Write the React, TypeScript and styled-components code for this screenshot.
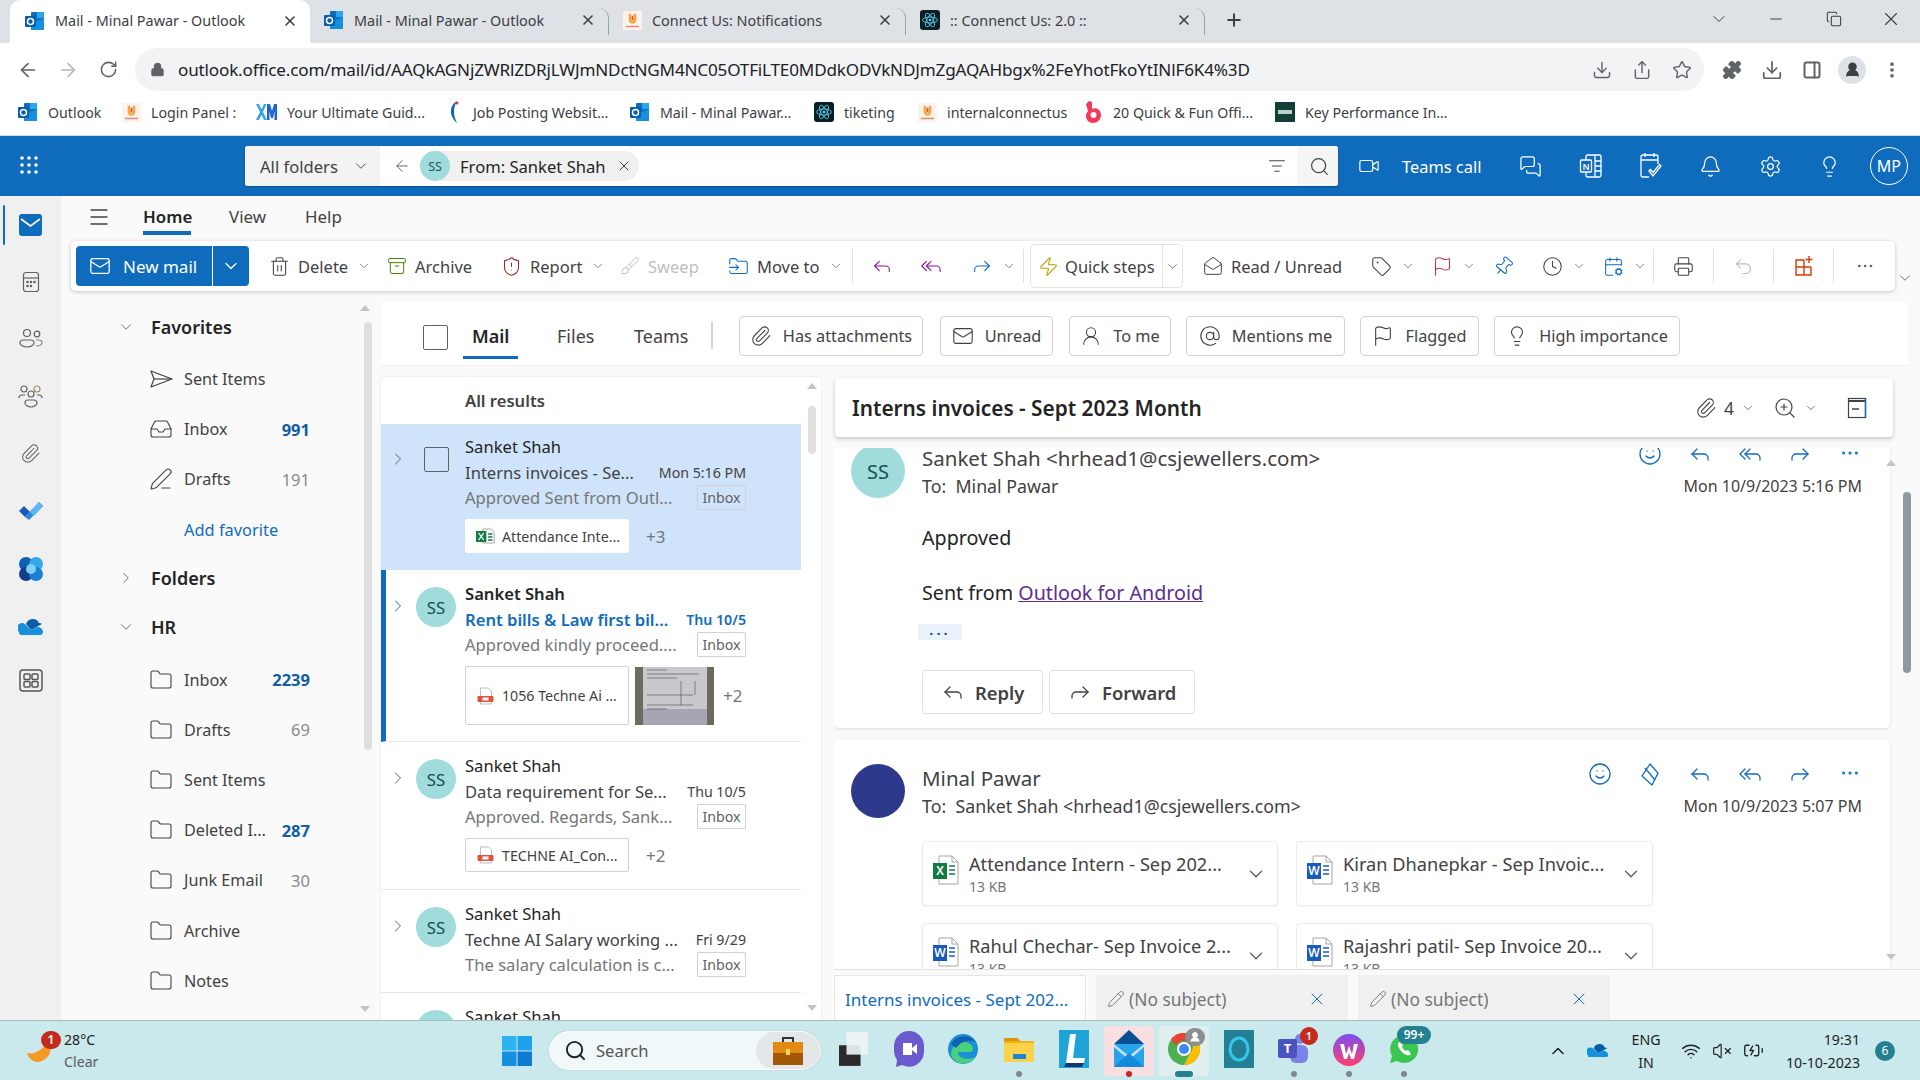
import React from "react";
import styled, { createGlobalStyle } from "styled-components";
import {
  ArrowLeft, ArrowRight, Archive, BatteryCharging, Bell, Brush, CalendarCog, ChevronDown, ChevronRight, ChevronUp, Clock,
  Download, Ellipsis, EllipsisVertical, Flag, Folder, FolderInput, Forward, Inbox, Lightbulb, Lock, Mail, MailOpen,
  Menu, MessagesSquare, Minus, Paperclip, PanelRight, Pencil, PenLine, Pin, Plus, Printer, Puzzle, Reply, ReplyAll, RotateCw,
  Search, Settings, Share, ShieldAlert, Smile, Star, Tag, Trash2, Undo2,
  Video, VolumeX, Wifi, X, Zap, AtSign, UserRound, ZoomIn, Copy, ListFilter,
} from "lucide-react";

const Global = createGlobalStyle`
  html, body { margin: 0; padding: 0; background: #fff; }
  body { font-family: "Noto Sans", "Open Sans", Arial, sans-serif; color: #242424; }
  * { box-sizing: border-box; }
  svg { flex-shrink: 0; }
`;

const BLUE = "#0f6cbd";

const Page = styled.div`
  width: 1920px; height: 1080px; display: flex; flex-direction: column; overflow: hidden; background: #fafafa;
`;

/* ---------- browser chrome ---------- */
const TabStrip = styled.div`
  height: 43px; background: #dee1e6; display: flex; align-items: stretch; padding-left: 10px; flex: none;
`;
const BrowserTab = styled.div<{ $active?: boolean; $w: number; $sep?: boolean }>`
  width: ${(p) => p.$w}px; display: flex; align-items: center; gap: 10px; padding: 0 12px 2px ${(p) => (p.$active ? 15 : 14)}px; font-size: 14.4px; color: #3c4043;
  background: ${(p) => (p.$active ? "#fff" : "transparent")}; border-radius: 10px 10px 0 0; position: relative;
  border-right: ${(p) => (p.$sep ? "1px solid #9aa0a6" : "0")};
  height: ${(p) => (p.$sep ? "27px" : "auto")};
  align-self: ${(p) => (p.$sep ? "center" : "stretch")};
  margin-top: ${(p) => (p.$sep ? "-1px" : "0")};
`;
const TabTitle = styled.span`flex: 1; white-space: nowrap; overflow: hidden;`;
const NewTab = styled.div`width: 58px; display: flex; align-items: center; justify-content: center; color: #3c4043; padding-bottom: 4px;`;
const WindowControls = styled.div`margin-left: auto; display: flex; align-items: center; height: 38px;`;
const WinCtl = styled.div`width: 57.5px; display: flex; align-items: center; justify-content: center; color: #3c4043;`;

const Toolbar = styled.div`height: 48px; background: #fff; display: flex; align-items: flex-end; flex: none; padding-left: 8px; color: #5f6368;`;
const NavBtn = styled.div`width: 40px; height: 43px; display: flex; align-items: center; justify-content: center;`;
const Omnibox = styled.div`
  margin-left: 7px; width: 1569px; height: 43px; background: #f1f3f4; border-radius: 22px; display: flex; align-items: center; padding-left: 15px;
`;
const Url = styled.span`margin-left: 13px; font-size: 17.1px; color: #202124; white-space: nowrap; letter-spacing: -0.01em;`;
const OmniIcons = styled.div`margin-left: auto; display: flex; padding-right: 2px; color: #5f6368;`;
const OmniIcon = styled.div`width: 40px; display: flex; justify-content: center;`;
const ExtIcons = styled.div`display: flex; align-items: center; height: 43px; padding-left: 8px;`;
const ExtIcon = styled.div`width: 40px; display: flex; justify-content: center; align-items: center; color: #5f6368;`;
const ProfileDot = styled.div`width: 28px; height: 28px; border-radius: 50%; background: #dee1e6; color: #3c4043; display: flex; align-items: center; justify-content: center;`;

const BookmarkBar = styled.div`height: 45px; flex: none; background: #fff; border-bottom: 1px solid #d9d9d9; display: flex; align-items: center; padding: 0 0 2px 18px; font-size: 14.2px; color: #3c4043;`;
const Bookmark = styled.div<{ $w: number }>`width: ${(p) => p.$w}px; display: flex; align-items: center; gap: 10px; white-space: nowrap; flex: none;`;

/* ---------- outlook header ---------- */
const AppHeader = styled.div`height: 60px; flex: none; background: ${BLUE}; display: flex; align-items: center; color: #fff;`;
const Waffle = styled.div`width: 245px; padding-left: 20px; display: flex;`;
const SearchBox = styled.div`width: 1093px; height: 40px; background: #fff; border-radius: 3px; display: flex; align-items: center; color: #242424; box-shadow: 0 1px 2px rgba(0,0,0,.3);`;
const Scope = styled.div`width: 135px; height: 100%; background: #f3f3f3; display: flex; align-items: center; padding-left: 15px; gap: 14px; font-size: 16.6px; color: #424242; border-radius: 3px 0 0 3px; white-space: nowrap;`;
const BackArrow = styled.div`width: 40px; display: flex; justify-content: center; color: #616161; padding-left: 3px;`;
const SearchChip = styled.div`width: 219px; height: 30px; background: #f0f0f0; border-radius: 15px; display: flex; align-items: center; font-size: 16.6px; gap: 10px; color: #242424; white-space: nowrap;`;
const ChipAvatar = styled.div`width: 30px; height: 30px; border-radius: 50%; background: #9fdcdb; display: flex; align-items: center; justify-content: center; font-size: 12.5px; color: #1c5a5e; flex: none;`;
const SearchEnd = styled.div`margin-left: auto; display: flex; align-items: center; height: 100%;`;
const FilterBtn = styled.div`width: 40px; display: flex; justify-content: center; color: #424242;`;
const SearchBtn = styled.div`width: 41px; height: 100%; background: #f5f5f5; display: flex; align-items: center; justify-content: center; color: #424242; border-radius: 0 3px 3px 0; padding-left: 4px;`;
const TeamsCall = styled.div`width: 163px; display: flex; align-items: center; padding-left: 20px; gap: 22px; font-size: 16.4px; white-space: nowrap; color: #fff;`;
const HeadIcon = styled.div`width: 60px; display: flex; justify-content: center; color: #fff; margin-left: -0.2px;`;
const Initials = styled.div`width: 38px; height: 38px; border: 1px solid #fff; border-radius: 50%; display: flex; align-items: center; justify-content: center; font-size: 16px; margin-left: 10px;`;

/* ---------- outlook body ---------- */
const Body = styled.div`flex: 1; min-height: 0; display: flex;`;
const Rail = styled.div`width: 61px; flex: none; background: #f0f0f0; display: flex; flex-direction: column; padding-top: 9px; align-items: stretch;`;
const RailItem = styled.div<{ $active?: boolean; $h: number; $mt?: number }>`
  height: ${(p) => p.$h}px; margin-top: ${(p) => p.$mt ?? 0}px; display: flex; align-items: center; justify-content: center; position: relative; color: #616161;
  &::before { content: ""; display: ${(p) => (p.$active ? "block" : "none")}; position: absolute; left: 3px; top: 0; bottom: 0; width: 2px; background: ${BLUE}; border-radius: 2px; }
`;
const Workspace = styled.div`flex: 1; min-width: 0; display: flex; flex-direction: column;`;
const CommandTabs = styled.div`height: 45px; flex: none; display: flex; align-items: center; font-size: 16.9px; color: #424242; padding: 0 0 4px 26px;`;
const Hamburger = styled.div`width: 56px; color: #424242; display: flex;`;
const CmdTab = styled.div<{ $active?: boolean; $w: number }>`
  width: ${(p) => p.$w}px; position: relative; font-weight: ${(p) => (p.$active ? 600 : 400)}; color: ${(p) => (p.$active ? "#242424" : "#424242")}; height: 100%; display: flex; align-items: center;
  &::after { content: ""; display: ${(p) => (p.$active ? "block" : "none")}; position: absolute; left: 0; width: 48px; bottom: 2px; height: 4px; background: ${BLUE}; }
`;
const Ribbon = styled.div`
  height: 50px; flex: none; margin-left: 10px; width: 1824px; background: #fff; border-radius: 5px; box-shadow: 0 1px 4px rgba(0,0,0,.22); display: flex; align-items: center; padding-left: 5px; font-size: 16.5px; color: #424242; position: relative;
`;
const CollapseRibbon = styled.div`position: absolute; right: -19px; top: 28px; color: #616161;`;
const NewMail = styled.div`
  width: 173px; height: 40px; background: ${BLUE}; border-radius: 4px; color: #fff; display: flex; align-items: center; margin-right: 20px; flex: none; font-size: 17px;
`;
const NewMailMain = styled.div`width: 137px; display: flex; align-items: center; gap: 12px; padding-left: 13px; border-right: 1px solid #fff; height: 100%; white-space: nowrap;`;
const NewMailCaret = styled.div`flex: 1; display: flex; justify-content: center;`;
const RibBtn = styled.div<{ $w: number; $dim?: boolean; $pl?: number }>`
  width: ${(p) => p.$w}px; padding-left: ${(p) => p.$pl ?? 0}px; display: flex; align-items: center; gap: 8px; flex: none; white-space: nowrap; color: ${(p) => (p.$dim ? "#bdbdbd" : "#424242")};
`;
const Caret = styled.span`margin-left: 1px; color: #616161; display: flex;`;
const RibSep = styled.div`width: 1px; height: 34px; background: #e0e0e0; flex: none;`;
const QuickSteps = styled.div`
  width: 153px; height: 44px; margin: 0 20px 0 6px; border: 1px solid #e3e3e3; border-radius: 5px; display: flex; align-items: center; flex: none; padding-left: 7px; gap: 6px; white-space: nowrap;
`;
const QuickCaret = styled.div`margin-left: auto; border-left: 1px solid #e3e3e3; width: 20px; height: 100%; display: flex; align-items: center; justify-content: center; color: #616161;`;

const Work = styled.div`flex: 1; min-height: 0; display: flex; margin-top: 11px;`;
const Nav = styled.div`width: 319px; flex: none; position: relative; overflow: hidden;`;
const ScrollThumb = styled.div<{ $top: number; $h: number; $right: number; $c?: string; $w?: number }>`
  position: absolute; top: ${(p) => p.$top}px; height: ${(p) => p.$h}px; right: ${(p) => p.$right}px; width: ${(p) => p.$w ?? 8}px; border-radius: 4px; background: ${(p) => p.$c ?? "#dedede"};
`;
const ScrollArrow = styled.div<{ $top: number; $right: number; $down?: boolean }>`
  position: absolute; top: ${(p) => p.$top}px; right: ${(p) => p.$right}px; width: 0; height: 0; border-left: 5px solid transparent; border-right: 5px solid transparent;
  ${(p) => (p.$down ? "border-top: 6px solid #c4c4c4;" : "border-bottom: 6px solid #c4c4c4;")}
`;
const NavHead = styled.div<{ $mb?: number }>`
  height: 49px; margin-bottom: ${(p) => p.$mb ?? 0}px; display: flex; align-items: center; font-size: 18px; font-weight: 600; color: #242424;
`;
const NavChevron = styled.div`width: 90px; padding-left: 56px; display: flex; color: #616161;`;
const NavRow = styled.div`
  height: 50.2px; display: flex; align-items: center; padding-left: 88px; width: 249px; font-size: 16.2px; color: #424242; gap: 11px;
`;
const NavLabel = styled.span`flex: 1; white-space: nowrap;`;
const NavCount = styled.span<{ $unread?: boolean }>`
  font-size: 16.5px; font-weight: ${(p) => (p.$unread ? 700 : 400)}; color: ${(p) => (p.$unread ? "#115ea3" : "#8a8a8a")};
`;
const AddFav = styled.div`height: 49px; display: flex; align-items: center; padding-left: 123px; font-size: 16.4px; color: #0f6cbd;`;

const RightPane = styled.div`flex: 1; min-width: 0; display: flex; flex-direction: column;`;
const FilterBar = styled.div`
  height: 64px; flex: none; width: 1527px; margin-left: 1px; background: #fff; border-bottom: 1px solid #eee; display: flex; align-items: center; padding: 4px 0 0 42px; font-size: 18px; color: #424242; border-radius: 3px;
`;
const CheckBox = styled.div<{ $c?: string }>`width: 25px; height: 25px; border: 1px solid ${(p) => p.$c ?? "#616161"}; border-radius: 2px; flex: none; margin-top: 3px;`;
const PivotTab = styled.div<{ $active?: boolean; $w: number; $ml?: number }>`
  width: ${(p) => p.$w}px; margin-left: ${(p) => p.$ml ?? 0}px; height: 100%; display: flex; align-items: center; position: relative; font-weight: ${(p) => (p.$active ? 600 : 400)}; color: ${(p) => (p.$active ? "#242424" : "#424242")}; padding-left: 9px;
  &::after { content: ""; display: ${(p) => (p.$active ? "block" : "none")}; position: absolute; left: 0; bottom: 6px; width: 55px; height: 3px; background: ${BLUE}; }
`;
const PivotSep = styled.div`width: 2px; height: 27px; background: #cfd8e2; margin: 0 26px 0 0; flex: none;`;
const FilterChip = styled.div<{ $w: number; $mr: number }>`
  width: ${(p) => p.$w}px; margin-right: ${(p) => p.$mr}px; height: 40px; border: 1px solid #d1d1d1; border-radius: 4px; display: flex; align-items: center; justify-content: center; gap: 11px; font-size: 16.3px; white-space: nowrap; flex: none; background: #fff;
`;

const Split = styled.div`flex: 1; min-height: 0; display: flex; margin-top: 10px;`;
const ListCard = styled.div`width: 442px; flex: none; background: #fff; position: relative; overflow: hidden; border-radius: 4px 4px 0 0; border: 1px solid #f0f0f0; border-bottom: 0;`;
const ListHead = styled.div`height: 47px; padding-left: 84px; display: flex; align-items: center; font-size: 16.6px; font-weight: 600; color: #424242;`;
const MailItem = styled.div<{ $h: number; $sel?: boolean; $unread?: boolean }>`
  width: 420px; height: ${(p) => p.$h}px; flex: none; display: flex; background: ${(p) => (p.$sel ? "#cfe4fa" : "#fff")}; border-bottom: 1px solid ${(p) => (p.$sel ? "#cfe4fa" : "#e6e6e6")};
  border-left: ${(p) => (p.$unread ? `5px solid ${BLUE}` : "0")}; padding-top: ${(p) => (p.$sel ? 10 : 11)}px;
`;
const MailLead = styled.div<{ $unread?: boolean }>`
  width: ${(p) => (p.$unread ? 79 : 84)}px; flex: none; display: flex; align-items: flex-start; padding-left: ${(p) => (p.$unread ? 5 : 10)}px; gap: 12px; padding-top: 6px; color: ${(p) => (p.$unread ? BLUE : "#616161")};
`;
const MailChevron = styled.div`width: 13px; padding-top: 9px; display: flex; justify-content: center; flex: none;`;
const SelectBox = styled.div`padding-left: 8px; padding-top: 4px;`;
const Avatar = styled.div<{ $size: number; $bg?: string }>`
  width: ${(p) => p.$size}px; height: ${(p) => p.$size}px; border-radius: 50%; background: ${(p) => p.$bg ?? "#9fdcdb"}; flex: none; display: flex; align-items: center; justify-content: center; color: #174f52; font-size: ${(p) => Math.min(20, p.$size * 0.42)}px;
`;
const MailMain = styled.div`width: 281px; flex: none; display: flex; flex-direction: column;`;
const MailLine = styled.div<{ $bold?: boolean }>`
  height: 25.5px; display: flex; align-items: center; justify-content: space-between; font-size: 16.6px; line-height: 25px; white-space: nowrap; font-weight: ${(p) => (p.$bold ? 600 : 400)};
`;
const Subject = styled.span<{ $blue?: boolean }>`color: ${(p) => (p.$blue ? BLUE : "#424242")}; font-weight: ${(p) => (p.$blue ? 600 : 400)};`;
const When = styled.span<{ $blue?: boolean }>`font-size: 14.2px; color: ${(p) => (p.$blue ? BLUE : "#424242")}; font-weight: ${(p) => (p.$blue ? 600 : 400)};`;
const Preview = styled.span`color: #767676;`;
const InboxTag = styled.span`
  width: 49px; height: 25px; border: 1px solid #d1d1d1; border-radius: 1px; font-size: 14.2px; color: #616161; display: flex; align-items: center; justify-content: center; flex: none;
`;
const Attachments = styled.div`display: flex; align-items: center; margin-top: 8.5px; gap: 6px; font-size: 14.2px; color: #424242;`;
const AttachChip = styled.div<{ $h: number; $flat?: boolean }>`
  width: 164px; height: ${(p) => p.$h}px; background: #fff; border: 1px solid ${(p) => (p.$flat ? "#fff" : "#d1d1d1")}; border-radius: 2px; display: flex; align-items: center; gap: 7px; padding-left: 10px; white-space: nowrap; overflow: hidden;
`;
const More = styled.span<{ $ml: number }>`font-size: 17px; color: #767676; margin-left: ${(p) => p.$ml}px;`;

const ReadPane = styled.div`width: 1085px; margin-left: 13px; flex: none; display: flex; flex-direction: column; position: relative;`;
const ConvHead = styled.div`
  margin-top: 2px; height: 59px; width: 1058px; background: #fff; border-radius: 4px; box-shadow: 0 2px 4px rgba(0,0,0,.2); display: flex; align-items: center; padding-left: 17px; flex: none; position: relative; z-index: 1;
`;
const ConvTitle = styled.div`font-size: 20.8px; font-weight: 600; color: #242424; white-space: nowrap;`;
const ConvTools = styled.div`margin-left: auto; display: flex; align-items: center; color: #424242; font-size: 17.5px; padding-right: 24px;`;
const ConvTool = styled.div<{ $w: number }>`width: ${(p) => p.$w}px; display: flex; align-items: center; gap: 7px;`;
const Messages = styled.div`flex: 1; min-height: 0; margin-top: 11px; overflow: hidden; position: relative;`;
const MsgCard = styled.div<{ $h?: number; $mt?: number; $pt: number }>`
  width: 1055px; background: #fff; border-radius: 4px; padding: ${(p) => p.$pt}px 28px 0 16px; box-shadow: 0 1px 3px rgba(0,0,0,.13); height: ${(p) => p.$h}px; margin-top: ${(p) => p.$mt ?? 0}px;
`;
const MsgHeader = styled.div`display: flex; gap: 17px;`;
const MsgMeta = styled.div`flex: 1; display: flex; flex-direction: column;`;
const MetaLine = styled.div`height: 28px; display: flex; align-items: center; justify-content: space-between; white-space: nowrap;`;
const Sender = styled.span`font-size: 20.5px; color: #424242;`;
const ToLine = styled.span`font-size: 17.8px; color: #424242;`;
const Stamp = styled.span`font-size: 16px; color: #424242;`;
const Actions = styled.div<{ $up: number }>`display: flex; margin-right: -13px; transform: translateY(-${(p) => p.$up}px);`;
const Action = styled.div`width: 50px; display: flex; justify-content: center; color: #0f6cbd;`;
const Para = styled.div<{ $mt: number }>`margin: ${(p) => p.$mt}px 0 0 71px; font-size: 19.7px; line-height: 30px; color: #242424;`;
const MailLink = styled.a`color: #5c2d91; text-decoration: underline;`;
const Elide = styled.div`margin: 16px 0 0 67px; width: 44px; height: 16px; background: #e9f2fb; border-radius: 2px; display: flex; align-items: center; justify-content: center; color: #0f4c8a; letter-spacing: 3px; font-size: 15px; font-weight: 600; line-height: 8px; padding-bottom: 6px;`;
const ReplyRow = styled.div`display: flex; gap: 6px; margin: 30px 0 0 71px;`;
const ReplyBtn = styled.div<{ $w: number }>`
  width: ${(p) => p.$w}px; height: 44px; border: 1px solid #e0e0e0; border-radius: 4px; display: flex; align-items: center; padding-left: 18px; gap: 10px; font-size: 18.4px; font-weight: 600; color: #424242; background: #fff;
`;
const FileGrid = styled.div`display: grid; grid-template-columns: 356px 357px; column-gap: 18px; row-gap: 17px; margin: 21px 0 0 71px;`;
const FileCard = styled.div`
  height: 65px; border: 1px solid #ececec; border-radius: 4px; display: flex; align-items: flex-start; padding: 13px 10px 0 10px; gap: 10px; box-shadow: 0 1px 2px rgba(0,0,0,.05); background: #fff;
`;
const FileInfo = styled.div`flex: 1; min-width: 0; display: flex; flex-direction: column; margin-top: -4px;`;
const FileName = styled.span`font-size: 18.2px; color: #424242; white-space: nowrap; line-height: 26px;`;
const FileSize = styled.span`font-size: 14px; color: #767676; line-height: 20px;`;
const FileCaret = styled.div`align-self: center; margin-top: -13px; color: #616161; display: flex;`;
const ComposeBar = styled.div`height: 51px; flex: none; border-top: 1px solid #e0e0e0; background: #fafafa; display: flex; padding-top: 5px; gap: 10px; margin-left: -1px;`;
const ComposeTab = styled.div<{ $active?: boolean }>`
  width: 252px; background: ${(p) => (p.$active ? "#fff" : "#f0f0f0")}; border: 1px solid ${(p) => (p.$active ? "#e6e6e6" : "#f0f0f0")}; border-bottom: 0; display: flex; align-items: center; padding: 2px 20px 0 10px; gap: 4px; font-size: ${(p) => (p.$active ? 17 : 17.4)}px; color: ${(p) => (p.$active ? BLUE : "#767676")}; white-space: nowrap; justify-content: space-between;
`;
const ComposeLeft = styled.span`display: flex; align-items: center; gap: 4px;`;

/* ---------- taskbar ---------- */
const Taskbar = styled.div`height: 60px; flex: none; background: #c9e9ec; border-top: 1px solid #a9bcc0; display: flex; align-items: center; position: relative;`;
const Weather = styled.div`width: 502px; display: flex; align-items: center; padding-left: 25px; gap: 8px;`;
const WeatherIcon = styled.div`position: relative; width: 31px; height: 40px;`;
const NotifDot = styled.div<{ $c: string; $w?: number; $r: number; $t: number; $fs?: number }>`
  position: absolute; right: ${(p) => p.$r}px; top: ${(p) => p.$t}px; min-width: ${(p) => p.$w ?? 18}px; height: 18px; padding: 0 3px; border-radius: 9px; background: ${(p) => p.$c}; color: #fff; font-size: ${(p) => p.$fs ?? 11}px; font-weight: 600; display: flex; align-items: center; justify-content: center; white-space: nowrap;
`;
const WeatherText = styled.div`display: flex; flex-direction: column; font-size: 14.2px; line-height: 22px; color: #1f1f1f;`;
const WeatherSub = styled.span`color: #5b5b5b;`;
const WinLogo = styled.div`width: 47px; display: flex; justify-content: flex-start;`;
const TaskSearch = styled.div`
  width: 272px; height: 39px; border-radius: 20px; background: #f1f8f9; border: 1px solid #fff; box-shadow: 0 0 1px rgba(0,0,0,.3); display: flex; align-items: center; padding-left: 14px; gap: 9px; font-size: 16.6px; color: #555; margin-right: 3px;
`;
const SearchBadge = styled.div`margin-left: auto; width: 64px; height: 100%; border-radius: 20px; background: #e3e7e7; display: flex; align-items: center; justify-content: center;`;
const TaskCell = styled.div<{ $w?: number; $bg?: string }>`
  width: ${(p) => p.$w ?? (p.$bg ? 50 : 55)}px; margin: 0 ${(p) => (p.$bg ? 2.5 : 0)}px; height: 50px; flex: none; display: flex; align-items: center; justify-content: center; position: relative; background: ${(p) => p.$bg ?? "transparent"}; border-radius: 4px; padding-bottom: 4px;
`;
const RunDot = styled.div<{ $c?: string; $wide?: boolean }>`
  position: absolute; bottom: -1px; left: 50%; transform: translateX(-50%); width: ${(p) => (p.$wide ? 18 : 6)}px; height: 6px; border-radius: 3px; background: ${(p) => p.$c ?? "#7d8a8c"};
`;
const TrayGap = styled.div`width: 112px; flex: none;`;
const Tray = styled.div<{ $w: number }>`width: ${(p) => p.$w}px; flex: none; display: flex; justify-content: center; align-items: center; color: #1f1f1f;`;
const TrayText = styled.div<{ $right?: boolean; $w: number }>`
  width: ${(p) => p.$w}px; flex: none; display: flex; flex-direction: column; font-size: 14.2px; line-height: 23px; color: #1f1f1f; text-align: ${(p) => (p.$right ? "right" : "center")};
`;
const Counter = styled.div`margin-left: 15px; width: 20px; height: 20px; border-radius: 50%; background: #22808f; color: #fff; font-size: 12px; display: flex; align-items: center; justify-content: center;`;

/* ---------- drawn logos ---------- */
const OutlookLogo = ({ s = 20 }: { s?: number }) => (
  <svg width={s} height={s} viewBox="0 0 20 20"><rect x="6" y="1" width="13" height="18" rx="1" fill="#0f6cbd" /><rect x="12" y="1" width="7" height="6" fill="#28a8ea" /><rect x="6" y="7" width="7" height="6" fill="#0078d4" /><path d="M6 13l13-6v11a1 1 0 01-1 1H7a1 1 0 01-1-1z" fill="#1490df" /><rect x="0" y="5" width="11" height="11" rx="1" fill="#0a5da8" /><circle cx="5.5" cy="10.5" r="3" fill="none" stroke="#fff" strokeWidth="1.5" /></svg>
);
const ConnectLogo = ({ s = 19 }: { s?: number }) => (
  <svg width={s} height={s} viewBox="0 0 20 20"><rect width="20" height="20" fill="#fdf3ee" /><path d="M6 3v6c0 3 2 4.5 4 4.5s4-1.5 4-4.5V3h-2.6v6c0 1-.6 2-1.4 2S8.6 10 8.600 9V3z" fill="#f2a93b" /><path d="M9 5h2v5H9z" fill="#e2502c" /><rect x="3" y="15.500" width="14" height="1.600" fill="#e28d7a" /></svg>
);
const ReactLogo = ({ s = 20 }: { s?: number }) => (
  <svg width={s} height={s} viewBox="0 0 20 20"><rect width="20" height="20" rx="3" fill="#0d1f24" /><g fill="none" stroke="#61dafb" strokeWidth=".8"><ellipse cx="10" cy="10" rx="7.500" ry="3" /><ellipse cx="10" cy="10" rx="7.500" ry="3" transform="rotate(60 10 10)" /><ellipse cx="10" cy="10" rx="7.500" ry="3" transform="rotate(120 10 10)" /></g><circle cx="10" cy="10" r="1.300" fill="#61dafb" /></svg>
);
const XmLogo = () => (
  <svg width="21" height="16" viewBox="0 0 21 16"><path d="M0 0h3l2.500 5L8 0h2.500L7 8l4 8H8L5.500 11 3 16H0l4-8z" fill="#35a7e8" /><path d="M11 16V0h3l2 7 2-7h3v16h-2.500V7L17 14h-2l-1.500-7v9z" fill="#1f63d6" /></svg>
);
const JobLogo = () => (
  <svg width="20" height="24" viewBox="0 0 20 24"><path d="M14 1C7 5 5 15 14 23 10 15 10 8 14 1z" fill="#1465b0" /><circle cx="14" cy="3" r="1.500" fill="#d93a2b" /></svg>
);
const FunLogo = () => (
  <svg width="19" height="24" viewBox="0 0 19 24"><path d="M5 1l3 1v7c4-2 9 1 9 6 0 5-4 8-8 8-4 0-7-3-7-7 0-2 .7-3.500 2-5L2 4z" fill="#f23a5a" /><circle cx="9.500" cy="15" r="3" fill="#fff" /></svg>
);
const KpiLogo = () => (
  <svg width="20" height="20" viewBox="0 0 20 20"><rect width="20" height="20" fill="#123f36" /><rect x="3" y="8" width="14" height="4" fill="#b9d3cc" /></svg>
);
const WaffleIcon = () => (
  <svg width="20" height="20" viewBox="0 0 20 20" fill="#fff">{[2, 9, 16].flatMap((y) => [2, 9, 16].map((x) => <circle key={`${x}${y}`} cx={x} cy={y} r="1.800" />))}</svg>
);
const NotesIcon = () => (
  <svg width="24" height="26" viewBox="0 0 24 26" fill="none" stroke="#fff" strokeWidth="1.300"><rect x="7" y="2" width="15" height="22" rx="1.500" /><path d="M16 2v22M16 8h6M16 13h6M16 18h6" /><rect x="1.500" y="7" width="11" height="12" rx="1" fill={BLUE} /><text x="7" y="16.500" fontSize="9" fontFamily="Noto Sans" fontWeight="600" fill="#fff" stroke="none" textAnchor="middle">N</text></svg>
);
const TodoHeadIcon = () => (
  <svg width="24" height="28" viewBox="0 0 24 28" fill="none" stroke="#fff" strokeWidth="1.300"><path d="M20 12V5a2 2 0 00-2-2H5a2 2 0 00-2 2v18a2 2 0 002 2h6" /><path d="M3 8h17M7 1v4M16 1v4" /><path d="M11 19l4 5 8-10 -1.500-1.500-6.500 8-2.500-3z" /></svg>
);
const RailMail = () => (
  <svg width="25" height="24" viewBox="0 0 25 24"><rect x="1" y="1" width="23" height="22" rx="3" fill={BLUE} /><path d="M3 6l9.500 7L22 6" fill="none" stroke="#fff" strokeWidth="1.600" /></svg>
);
const PeopleIcon = () => (
  <svg width="26" height="20" viewBox="0 0 26 20" fill="none" stroke="#616161" strokeWidth="1.200"><circle cx="9" cy="5" r="3.500" /><circle cx="19" cy="6" r="2.800" /><path d="M2 15c0-2 1-3 3-3h8c2 0 3 1 3 3 0 2-3 4-7 4s-7-2-7-4z" /><path d="M18 12h3c2 0 3 1 3 2.500 0 2-2 3.500-6 3.500" stroke="#a08a70" /></svg>
);
const GroupsIcon = () => (
  <svg width="26" height="24" viewBox="0 0 26 24" fill="none" stroke="#616161" strokeWidth="1.200"><circle cx="6" cy="5" r="3" /><circle cx="19" cy="5" r="3" stroke="#a08a70" /><circle cx="13" cy="10" r="3" /><path d="M1 14c0-2 1-3 3-3h3M24 14c0-2-1-3-3-3h-2M7 19c0-2 1-3 3-3h6c2 0 3 1 3 3 0 2-3 4-6 4s-6-2-6-4z" /></svg>
);
const TodoLogo = () => (
  <svg width="26" height="22" viewBox="0 0 26 22"><path d="M1 12l5-5 6 6-5 5z" fill="#185abd" /><path d="M7 18L21 3l4 4L11 21z" fill="#2b88d8" /><path d="M12 13L21 3l4 4-9 10z" fill="#5eb5f2" /></svg>
);
const CubeLogo = () => (
  <svg width="26" height="26" viewBox="0 0 26 26"><circle cx="8" cy="8" r="7" fill="#0f5fb5" /><circle cx="18" cy="8" r="7" fill="#35a8e8" /><circle cx="8" cy="18" r="7" fill="#123f8a" /><circle cx="18" cy="18" r="7" fill="#1c7fd6" /><circle cx="13" cy="13" r="5" fill="#7fd0f5" /></svg>
);
const OneDriveLogo = ({ s = 26 }: { s?: number }) => (
  <svg width={s} height={s * 0.62} viewBox="0 0 26 16"><path d="M8 5a7 7 0 0113-1 5 5 0 013 1l-11 6z" fill="#0a5da8" /><path d="M1 13a5 5 0 016-8l6 6 6-3c3 0 6 2 6 5 0 1-1 3-3 3H4c-2 0-3-1-3-3z" fill="#1490df" /></svg>
);
const AppsIcon = () => (
  <svg width="24" height="23" viewBox="0 0 24 23" fill="none" stroke="#555" strokeWidth="1.500"><rect x="1" y="1" width="22" height="21" rx="3" /><rect x="5" y="5" width="6" height="5.500" rx="1" /><rect x="13" y="5" width="6" height="5.500" rx="1" /><rect x="5" y="12.500" width="6" height="5.500" rx="1" /><rect x="13" y="12.500" width="6" height="5.500" rx="1" /></svg>
);
const CalendarRail = () => (
  <svg width="20" height="22" viewBox="0 0 20 22" fill="none" stroke="#616161" strokeWidth="1.200"><rect x="2.500" y="1.500" width="15" height="19" rx="2.500" /><path d="M2.500 7h15" /><circle cx="6.500" cy="11" r=".7" fill="#616161" /><circle cx="10" cy="11" r=".7" fill="#616161" /><circle cx="13.500" cy="11" r=".7" fill="#616161" /><circle cx="6.500" cy="15" r=".7" fill="#616161" /><circle cx="10" cy="15" r=".7" fill="#616161" /></svg>
);
const SendIcon = () => (
  <svg width="24" height="24" viewBox="0 0 24 24" fill="none" stroke="#424242" strokeWidth="1.200" strokeLinejoin="round"><path d="M2 4l21 8-21 8 3-8z" /><path d="M5 12h18" /></svg>
);
const AddAppIcon = () => (
  <svg width="22" height="22" viewBox="0 0 22 22" fill="none" stroke="#d83b01" strokeWidth="1.400"><path d="M11 5H3v15h15v-8M3 12h15M11 5v15" /><path d="M16 1v7M12.500 4.500h7" /></svg>
);
const CollapseIcon = () => (
  <svg width="24" height="24" viewBox="0 0 24 24" fill="none"><rect x="3.500" y="2.500" width="17" height="19" stroke="#424242" strokeWidth="1.200" /><path d="M3.500 5h17" stroke="#424242" strokeWidth="2" /><path d="M7 13h7" stroke="#424242" strokeWidth="1.500" /><path d="M20.500 2.500v19" stroke={BLUE} strokeWidth="1.500" /></svg>
);
const FluentDiamond = () => (
  <svg width="24" height="26" viewBox="0 0 24 26" fill="none" stroke={BLUE} strokeWidth="1.300"><path d="M12 2l8 9-6 12-10-9z" /><path d="M7 6l10 12" /></svg>
);
const ExcelSmall = () => (
  <svg width="19" height="16" viewBox="0 0 22 16" preserveAspectRatio="none"><path d="M8 1h10l3 3v11H8z" fill="#fff" stroke="#a0a0a0" /><rect x="0" y="3" width="12" height="11" fill="#107c41" /><path d="M3 5l6 7M9 5l-6 7" stroke="#fff" strokeWidth="1.200" /><path d="M14 6h5M14 9h5M14 12h5" stroke="#107c41" strokeWidth="1.300" /></svg>
);
const PdfSmall = () => (
  <svg width="19" height="18" viewBox="0 0 18 18"><path d="M4 1h8l3 3v13H4z" fill="#fff" stroke="#bdbdbd" /><rect x="1" y="9" width="16" height="6" rx="1" fill="#e0533d" /><rect x="6" y="10.500" width="6" height="3" fill="#fff" /></svg>
);
const DocIcon = ({ kind }: { kind: "x" | "w" }) => (
  <svg width="26" height="30" viewBox="0 0 26 30"><path d="M6 1h13l6 6v22H6z" fill="#fff" stroke="#a6a6a6" /><path d="M19 1v6h6" fill="none" stroke="#a6a6a6" /><rect x="0" y="8" width="14" height="16" fill={kind === "x" ? "#107c41" : "#185abd"} /><text x="7" y="20" fontSize="12" fontFamily="Noto Sans" fontWeight="600" fill="#fff" textAnchor="middle">{kind === "x" ? "X" : "W"}</text>{[11, 15, 19].map((y) => <path key={y} d={`M16 ${y}h6`} stroke={kind === "x" ? "#107c41" : "#185abd"} strokeWidth="1.500" />)}</svg>
);
const Thumb = () => (
  <svg width="79" height="58" viewBox="0 0 79 58"><rect width="79" height="58" fill="#6e6a60" /><rect x="8" y="0" width="64" height="58" fill="#c9c8cc" /><rect x="8" y="42" width="64" height="16" fill="#a6a5b4" /><g stroke="#4a4a52" strokeWidth=".6" fill="none"><path d="M12 3h20M12 7h52M12 11h30M12 28h46M12 38h46M12 42h20M46 14v24M60 14v14" /></g></svg>
);
const MoonLogo = () => (
  <svg width="32" height="34" viewBox="0 0 32 34"><path d="M2 22c8 2 16-3 22-14 4 8 2 18-7 22-6 3-13-1-15-8z" fill="#f59a23" /></svg>
);
const WindowsLogo = () => (
  <svg width="30" height="30" viewBox="0 0 30 30"><rect width="14.500" height="14.500" fill="#2bb4f0" /><rect x="15.500" width="14.500" height="14.500" fill="#1da1ea" /><rect y="15.500" width="14.500" height="14.500" fill="#1590e0" /><rect x="15.500" y="15.500" width="14.500" height="14.500" fill="#0f7ad1" /></svg>
);
const BagLogo = () => (
  <svg width="30" height="29" viewBox="0 0 30 29"><path d="M10 6V2h10v4" fill="none" stroke="#333" strokeWidth="2" /><rect y="6" width="30" height="11" fill="#e38a14" /><rect y="17" width="30" height="12" fill="#a35808" /><rect x="13" y="13" width="4" height="6" fill="#ffd54a" /></svg>
);
const TaskViewLogo = () => (
  <svg width="30" height="36" viewBox="0 0 32 36"><rect x="0" y="14" width="23" height="22" fill="#2a2a2a" /><rect x="8" y="0" width="23" height="24" fill="#eef3f4" opacity=".92" /></svg>
);
const MeetLogo = () => (
  <svg width="30" height="36" viewBox="0 0 30 36"><path d="M15 0a15 15 0 0115 15v6a15 15 0 01-22 13l-6 2 1-7A15 15 0 010 21v-6A15 15 0 0115 0z" fill="#6a5acd" /><rect x="9" y="12" width="9" height="12" fill="#fff" /><path d="M18 17l5-4v10l-5-4z" fill="#fff" /></svg>
);
const EdgeLogo = () => (
  <svg width="30" height="30" viewBox="0 0 30 30"><circle cx="15" cy="15" r="15" fill="#1a8fd8" /><path d="M3 20C4 10 14 5 22 10c4 3 4 8 0 8H10c0 6 8 9 17 5-4 6-13 8-18 5-3-2-6-5-6-8z" fill="#49d17e" /><path d="M3 10a15 15 0 0125-2c-6-3-15-1-20 6z" fill="#0e62b0" /></svg>
);
const FolderLogo = () => (
  <svg width="30" height="30" viewBox="0 0 30 30"><path d="M0 4h13l3 3h14v21H0z" fill="#f5b30f" /><path d="M0 4h13l3 3H0z" fill="#d69412" /><rect y="9" width="30" height="19" fill="#fdd24b" /><rect x="9" y="20" width="13" height="5" fill="#1787d6" /></svg>
);
const LLogo = () => (
  <svg width="30" height="38" viewBox="0 0 30 38"><rect width="30" height="38" fill="#1fa4d8" /><path d="M11 4h6l-3 24h12l-1 5H7z" fill="#fff" /><path d="M7 33h18l-2 4H5z" fill="#16366f" /></svg>
);
const MailLogo = () => (
  <svg width="30" height="37" viewBox="0 0 30 37"><path d="M15 0L0 14h30z" fill="#0b4f94" /><rect y="14" width="30" height="23" fill="#29a3ec" /><path d="M0 14l15 12 15-12v3L15 30 0 17z" fill="#bce4fb" /><path d="M0 37l15-14 15 14z" fill="#148ada" /></svg>
);
const ChromeLogo = () => (
  <svg width="34" height="34" viewBox="0 0 34 34"><circle cx="17" cy="17" r="16" fill="#4caf50" /><path d="M17 1a16 16 0 0114 8H17a8 8 0 00-8 5L4 7a16 16 0 0113-6z" fill="#ea4335" /><path d="M31 9a16 16 0 01-14 24l6-12a8 8 0 000-12z" fill="#fbbc05" /><circle cx="17" cy="17" r="7" fill="#fff" /><circle cx="17" cy="17" r="5" fill="#4285f4" /></svg>
);
const AlexaLogo = () => (
  <svg width="30" height="38" viewBox="0 0 30 38"><rect width="30" height="38" fill="#237f93" /><ellipse cx="15" cy="19" rx="9" ry="11" fill="none" stroke="#35c8ea" strokeWidth="3" /></svg>
);
const TeamsLogo = () => (
  <svg width="32" height="36" viewBox="0 0 32 36"><circle cx="22" cy="8" r="5" fill="#7b83eb" /><rect x="12" y="14" width="18" height="18" rx="6" fill="#7b83eb" /><rect x="0" y="8" width="19" height="19" rx="2" fill="#4b53bc" /><text x="9.500" y="22" fontSize="13" fontWeight="700" fontFamily="Noto Sans" fill="#fff" textAnchor="middle">T</text></svg>
);
const WpsLogo = () => (
  <svg width="32" height="38" viewBox="0 0 32 38"><defs><linearGradient id="wg" x1="0" y1="0" x2="0" y2="1"><stop offset="0" stopColor="#7a4ff0" /><stop offset="1" stopColor="#ff3f6e" /></linearGradient></defs><circle cx="16" cy="20" r="16" fill="url(#wg)" /><path d="M7 14h4l2 10 3-8 3 8 2-10h4l-4 15h-3l-2-6-2 6h-3z" fill="#fff" /></svg>
);
const WhatsLogo = () => (
  <svg width="30" height="30" viewBox="0 0 30 30"><path d="M15 1a14 14 0 00-12 21L1 29l7-2a14 14 0 107-26z" fill="#3cc651" /><path d="M10 8c-2 2-1 6 3 10s7 4 9 2l-3-4-2 1c-2-1-3-2-4-4l1-2z" fill="#fff" /></svg>
);

const Ic = { size: 20, strokeWidth: 1.3 };

const bookmarks: [number, React.ReactNode, string][] = [
  [104, <OutlookLogo key="a" />, "Outlook"],
  [134, <ConnectLogo key="b" />, "Login Panel :"],
  [187, <XmLogo key="c" />, "Your Ultimate Guid..."],
  [187, <JobLogo key="d" />, "Job Posting Websit..."],
  [184, <OutlookLogo key="e" />, "Mail - Minal Pawar..."],
  [104, <ReactLogo key="f" />, "tiketing"],
  [166, <ConnectLogo key="g" />, "internalconnectus"],
  [191, <FunLogo key="h" />, "20 Quick & Fun Offi..."],
  [190, <KpiLogo key="i" />, "Key Performance In..."],
];

const navFolders: [string, string, boolean][] = [
  ["Inbox", "2239", true], ["Drafts", "69", false], ["Sent Items", "", false], ["Deleted I...", "287", true], ["Junk Email", "30", false], ["Archive", "", false], ["Notes", "", false],
];

const ChipIcon = { size: 22, strokeWidth: 1.2 };
const NavIc = { size: 24, strokeWidth: 1.1 };
const caret = <Caret><ChevronDown size={14} strokeWidth={1.3} /></Caret>;

const msgActions = (extra?: boolean) => (
  <>
    {extra ? <Action><Smile {...Ic} size={24} /></Action> : null}
    <Action>{extra ? <FluentDiamond /> : <Smile {...Ic} size={24} />}</Action>
    <Action><Reply {...Ic} size={24} /></Action>
    <Action><ReplyAll {...Ic} size={24} /></Action>
    <Action><Forward {...Ic} size={24} /></Action>
    <Action><Ellipsis {...Ic} size={22} /></Action>
  </>
);

export default function App() {
  return (
    <Page>
      <Global />
      <TabStrip>
        <BrowserTab $active $w={300}><OutlookLogo /><TabTitle>Mail - Minal Pawar - Outlook</TabTitle><X size={16} strokeWidth={2.4} /></BrowserTab>
        <BrowserTab $w={299} $sep><OutlookLogo /><TabTitle>Mail - Minal Pawar - Outlook</TabTitle><X size={16} strokeWidth={2.4} /></BrowserTab>
        <BrowserTab $w={297} $sep><ConnectLogo /><TabTitle>Connect Us: Notifications</TabTitle><X size={16} strokeWidth={2.4} /></BrowserTab>
        <BrowserTab $w={299} $sep><ReactLogo /><TabTitle>:: Connenct Us: 2.0 ::</TabTitle><X size={16} strokeWidth={2.4} /></BrowserTab>
        <NewTab><Plus size={20} strokeWidth={2.4} /></NewTab>
        <WindowControls>
          <WinCtl><ChevronDown size={20} strokeWidth={1.2} /></WinCtl>
          <WinCtl><Minus size={18} strokeWidth={1.5} /></WinCtl>
          <WinCtl><Copy size={16} strokeWidth={1.6} /></WinCtl>
          <WinCtl><X size={22} strokeWidth={1.2} /></WinCtl>
        </WindowControls>
      </TabStrip>

      <Toolbar>
        <NavBtn><ArrowLeft size={22} strokeWidth={1.8} /></NavBtn>
        <NavBtn><ArrowRight size={22} strokeWidth={1.8} color="#b6b9bd" /></NavBtn>
        <NavBtn><RotateCw size={19} strokeWidth={1.9} /></NavBtn>
        <Omnibox>
          <Lock size={15} fill="#5f6368" strokeWidth={1.8} />
          <Url>outlook.office.com/mail/id/AAQkAGNjZWRlZDRjLWJmNDctNGM4NC05OTFiLTE0MDdkODVkNDJmZgAQAHbgx%2FeYhotFkoYtINlF6K4%3D</Url>
          <OmniIcons>
            <OmniIcon><Download size={20} strokeWidth={1.7} /></OmniIcon>
            <OmniIcon><Share size={20} strokeWidth={1.7} /></OmniIcon>
            <OmniIcon><Star size={20} strokeWidth={1.7} /></OmniIcon>
          </OmniIcons>
        </Omnibox>
        <ExtIcons>
          <ExtIcon><Puzzle size={20} fill="#5f6368" strokeWidth={1.4} /></ExtIcon>
          <ExtIcon><Download size={22} strokeWidth={1.9} /></ExtIcon>
          <ExtIcon><PanelRight size={20} strokeWidth={2.4} /></ExtIcon>
          <ExtIcon><ProfileDot><UserRound size={17} fill="#3c4043" /></ProfileDot></ExtIcon>
          <ExtIcon><EllipsisVertical size={20} strokeWidth={2.4} /></ExtIcon>
        </ExtIcons>
      </Toolbar>

      <BookmarkBar>
        {bookmarks.map(([w, icon, label]) => (
          <Bookmark key={label} $w={w}>{icon}{label}</Bookmark>
        ))}
      </BookmarkBar>

      <AppHeader>
        <Waffle><WaffleIcon /></Waffle>
        <SearchBox>
          <Scope>All folders <ChevronDown size={18} strokeWidth={1.2} /></Scope>
          <BackArrow><ArrowLeft size={18} strokeWidth={1.3} /></BackArrow>
          <SearchChip>
            <ChipAvatar>SS</ChipAvatar>
            From: Sanket Shah
            <X size={16} strokeWidth={1.3} />
          </SearchChip>
          <SearchEnd>
            <FilterBtn><ListFilter size={18} strokeWidth={1.3} /></FilterBtn>
            <SearchBtn><Search size={21} strokeWidth={1.3} /></SearchBtn>
          </SearchEnd>
        </SearchBox>
        <TeamsCall><Video size={22} strokeWidth={1.3} />Teams call</TeamsCall>
        <HeadIcon><MessagesSquare size={23} strokeWidth={1.3} /></HeadIcon>
        <HeadIcon><NotesIcon /></HeadIcon>
        <HeadIcon><TodoHeadIcon /></HeadIcon>
        <HeadIcon><Bell size={23} strokeWidth={1.3} /></HeadIcon>
        <HeadIcon><Settings size={23} strokeWidth={1.3} /></HeadIcon>
        <HeadIcon><Lightbulb size={23} strokeWidth={1.3} /></HeadIcon>
        <Initials>MP</Initials>
      </AppHeader>

      <Body>
        <Rail>
          <RailItem $active $h={40}><RailMail /></RailItem>
          <RailItem $h={58} $mt={8}><CalendarRail /></RailItem>
          <RailItem $h={54}><PeopleIcon /></RailItem>
          <RailItem $h={62}><GroupsIcon /></RailItem>
          <RailItem $h={52}><Paperclip size={21} strokeWidth={1.2} /></RailItem>
          <RailItem $h={62}><TodoLogo /></RailItem>
          <RailItem $h={56}><CubeLogo /></RailItem>
          <RailItem $h={60}><OneDriveLogo /></RailItem>
          <RailItem $h={46}><AppsIcon /></RailItem>
        </Rail>
        <Workspace>
          <CommandTabs>
            <Hamburger><Menu size={24} strokeWidth={1.3} /></Hamburger>
            <CmdTab $active $w={86}>Home</CmdTab>
            <CmdTab $w={76}>View</CmdTab>
            <CmdTab $w={60}>Help</CmdTab>
          </CommandTabs>
          <Ribbon>
            <NewMail>
              <NewMailMain><Mail size={22} strokeWidth={1.4} />New mail</NewMailMain>
              <NewMailCaret><ChevronDown size={20} strokeWidth={1.5} /></NewMailCaret>
            </NewMail>
            <RibBtn $w={118}><Trash2 {...ChipIcon} size={21} />Delete{caret}</RibBtn>
            <RibBtn $w={114}><Archive {...ChipIcon} size={20} color="#498205" />Archive</RibBtn>
            <RibBtn $w={119}><ShieldAlert {...ChipIcon} size={21} color="#a4262c" />Report{caret}</RibBtn>
            <RibBtn $w={108} $dim><Brush {...ChipIcon} size={20} />Sweep</RibBtn>
            <RibBtn $w={124}><FolderInput {...ChipIcon} size={21} color={BLUE} />Move to{caret}</RibBtn>
            <RibSep />
            <RibBtn $w={67} $pl={18}><Reply {...ChipIcon} size={22} color="#881798" /></RibBtn>
            <RibBtn $w={51}><ReplyAll {...ChipIcon} size={22} color="#881798" /></RibBtn>
            <RibBtn $w={52}><Forward {...ChipIcon} size={22} color={BLUE} />{caret}</RibBtn>
            <RibSep />
            <QuickSteps><Zap {...ChipIcon} size={21} color="#c19c00" />Quick steps<QuickCaret><ChevronDown size={15} strokeWidth={1.3} /></QuickCaret></QuickSteps>
            <RibBtn $w={168}><MailOpen {...ChipIcon} size={20} />Read / Unread</RibBtn>
            <RibBtn $w={61}><Tag {...ChipIcon} size={21} />{caret}</RibBtn>
            <RibBtn $w={61}><Flag {...ChipIcon} size={21} color="#c4314b" />{caret}</RibBtn>
            <RibBtn $w={49}><Pin {...ChipIcon} size={21} color={BLUE} transform="rotate(40)" /></RibBtn>
            <RibBtn $w={61}><Clock {...ChipIcon} size={21} />{caret}</RibBtn>
            <RibBtn $w={50}><CalendarCog {...ChipIcon} size={21} color={BLUE} />{caret}</RibBtn>
            <RibSep />
            <RibBtn $w={59} $pl={19}><Printer {...ChipIcon} size={21} /></RibBtn>
            <RibSep />
            <RibBtn $w={59} $pl={19}><Undo2 {...ChipIcon} size={21} color="#bdbdbd" /></RibBtn>
            <RibSep />
            <RibBtn $w={59} $pl={19}><AddAppIcon /></RibBtn>
            <RibSep />
            <RibBtn $w={40} $pl={21}><Ellipsis {...ChipIcon} size={20} /></RibBtn>
            <CollapseRibbon><ChevronDown size={18} strokeWidth={1.2} /></CollapseRibbon>
          </Ribbon>

          <Work>
            <Nav>
              <ScrollArrow $top={3} $right={10} />
              <ScrollThumb $top={20} $h={428} $right={8} />
              <ScrollArrow $top={704} $right={10} $down />
              <NavHead $mb={3}><NavChevron><ChevronDown size={18} strokeWidth={1.2} /></NavChevron>Favorites</NavHead>
              <NavRow><SendIcon /><NavLabel>Sent Items</NavLabel></NavRow>
              <NavRow><Inbox {...NavIc} /><NavLabel>Inbox</NavLabel><NavCount $unread>991</NavCount></NavRow>
              <NavRow><PenLine {...NavIc} /><NavLabel>Drafts</NavLabel><NavCount>191</NavCount></NavRow>
              <AddFav>Add favorite</AddFav>
              <NavHead><NavChevron><ChevronRight size={18} strokeWidth={1.2} /></NavChevron>Folders</NavHead>
              <NavHead $mb={3}><NavChevron><ChevronDown size={18} strokeWidth={1.2} /></NavChevron>HR</NavHead>
              {navFolders.map(([label, count, unread]) => (
                <NavRow key={label}><Folder {...NavIc} /><NavLabel>{label}</NavLabel>{count ? <NavCount $unread={unread}>{count}</NavCount> : null}</NavRow>
              ))}
            </Nav>

            <RightPane>
              <FilterBar>
                <CheckBox />
                <PivotTab $active $w={85} $ml={15}>Mail</PivotTab>
                <PivotTab $w={77}>Files</PivotTab>
                <PivotTab $w={86}>Teams</PivotTab>
                <PivotSep />
                <FilterChip $w={184} $mr={17}><Paperclip {...ChipIcon} />Has attachments</FilterChip>
                <FilterChip $w={113} $mr={16}><Mail {...ChipIcon} />Unread</FilterChip>
                <FilterChip $w={102} $mr={15}><UserRound {...ChipIcon} />To me</FilterChip>
                <FilterChip $w={159} $mr={15}><AtSign {...ChipIcon} />Mentions me</FilterChip>
                <FilterChip $w={119} $mr={15}><Flag {...ChipIcon} />Flagged</FilterChip>
                <FilterChip $w={186} $mr={0}><Lightbulb {...ChipIcon} />High importance</FilterChip>
              </FilterBar>
              <Split>
                <ListCard>
                  <ScrollArrow $top={6} $right={4} />
                  <ScrollThumb $top={29} $h={48} $right={5} $c="#e0e0e0" />
                  <ScrollArrow $top={628} $right={4} $down />
                  <ListHead>All results</ListHead>
                  <MailItem $h={146} $sel>
                    <MailLead><MailChevron><ChevronRight size={20} strokeWidth={1.2} /></MailChevron><SelectBox><CheckBox /></SelectBox></MailLead>
                    <MailMain>
                      <MailLine>Sanket Shah</MailLine>
                      <MailLine><Subject>Interns invoices - Se...</Subject><When>Mon 5:16 PM</When></MailLine>
                      <MailLine><Preview>Approved Sent from Outl...</Preview><InboxTag>Inbox</InboxTag></MailLine>
                      <Attachments>
                        <AttachChip $h={34} $flat><ExcelSmall />Attendance Inte...</AttachChip>
                        <More $ml={11}>+3</More>
                      </Attachments>
                    </MailMain>
                  </MailItem>
                  <MailItem $h={172} $unread>
                    <MailLead $unread><MailChevron><ChevronRight size={20} strokeWidth={1.2} /></MailChevron><Avatar $size={40}>SS</Avatar></MailLead>
                    <MailMain>
                      <MailLine $bold>Sanket Shah</MailLine>
                      <MailLine><Subject $blue>Rent bills &amp; Law first bil...</Subject><When $blue>Thu 10/5</When></MailLine>
                      <MailLine><Preview>Approved kindly proceed....</Preview><InboxTag>Inbox</InboxTag></MailLine>
                      <Attachments>
                        <AttachChip $h={59}><PdfSmall />1056 Techne Ai ...</AttachChip>
                        <Thumb />
                        <More $ml={3}>+2</More>
                      </Attachments>
                    </MailMain>
                  </MailItem>
                  <MailItem $h={148}>
                    <MailLead><MailChevron><ChevronRight size={20} strokeWidth={1.2} /></MailChevron><Avatar $size={40}>SS</Avatar></MailLead>
                    <MailMain>
                      <MailLine>Sanket Shah</MailLine>
                      <MailLine><Subject>Data requirement for Se...</Subject><When>Thu 10/5</When></MailLine>
                      <MailLine><Preview>Approved. Regards, Sank...</Preview><InboxTag>Inbox</InboxTag></MailLine>
                      <Attachments>
                        <AttachChip $h={34}><PdfSmall />TECHNE AI_Con...</AttachChip>
                        <More $ml={11}>+2</More>
                      </Attachments>
                    </MailMain>
                  </MailItem>
                  <MailItem $h={103}>
                    <MailLead><MailChevron><ChevronRight size={20} strokeWidth={1.2} /></MailChevron><Avatar $size={40}>SS</Avatar></MailLead>
                    <MailMain>
                      <MailLine>Sanket Shah</MailLine>
                      <MailLine><Subject>Techne AI Salary working ...</Subject><When>Fri 9/29</When></MailLine>
                      <MailLine><Preview>The salary calculation is c...</Preview><InboxTag>Inbox</InboxTag></MailLine>
                    </MailMain>
                  </MailItem>
                  <MailItem $h={60}>
                    <MailLead><MailChevron><ChevronRight size={20} strokeWidth={1.2} /></MailChevron><Avatar $size={40}>SS</Avatar></MailLead>
                    <MailMain><MailLine>Sanket Shah</MailLine></MailMain>
                  </MailItem>
                </ListCard>

                <ReadPane>
                  <ConvHead>
                    <ConvTitle>Interns invoices - Sept 2023 Month</ConvTitle>
                    <ConvTools>
                      <ConvTool $w={78}><Paperclip {...ChipIcon} size={22} />4<ChevronDown size={14} strokeWidth={1.2} /></ConvTool>
                      <ConvTool $w={72}><ZoomIn {...ChipIcon} size={24} /><ChevronDown size={14} strokeWidth={1.2} /></ConvTool>
                      <ConvTool $w={24}><CollapseIcon /></ConvTool>
                    </ConvTools>
                  </ConvHead>
                  <Messages>
                    <MsgCard $h={290} $mt={-10} $pt={6}>
                      <MsgHeader>
                        <Avatar $size={54}>SS</Avatar>
                        <MsgMeta>
                          <MetaLine><Sender>Sanket Shah &lt;hrhead1@csjewellers.com&gt;</Sender><Actions $up={4}>{msgActions()}</Actions></MetaLine>
                          <MetaLine><ToLine>To:&nbsp; Minal Pawar</ToLine><Stamp>Mon 10/9/2023 5:16 PM</Stamp></MetaLine>
                        </MsgMeta>
                      </MsgHeader>
                      <Para $mt={23}>Approved</Para>
                      <Para $mt={25}>Sent from <MailLink>Outlook for Android</MailLink></Para>
                      <Elide>...</Elide>
                      <ReplyRow>
                        <ReplyBtn $w={121}><Reply {...Ic} size={24} />Reply</ReplyBtn>
                        <ReplyBtn $w={146}><Forward {...Ic} size={24} />Forward</ReplyBtn>
                      </ReplyRow>
                    </MsgCard>
                    <MsgCard $mt={12} $pt={24}>
                      <MsgHeader>
                        <Avatar $size={54} $bg="#2d3a8c" />
                        <MsgMeta>
                          <MetaLine><Sender>Minal Pawar</Sender><Actions $up={3}>{msgActions(true)}</Actions></MetaLine>
                          <MetaLine><ToLine>To:&nbsp; Sanket Shah &lt;hrhead1@csjewellers.com&gt;</ToLine><Stamp>Mon 10/9/2023 5:07 PM</Stamp></MetaLine>
                        </MsgMeta>
                      </MsgHeader>
                      <FileGrid>
                        <FileCard><DocIcon kind="x" /><FileInfo><FileName>Attendance Intern - Sep 202...</FileName><FileSize>13 KB</FileSize></FileInfo><FileCaret><ChevronDown size={22} strokeWidth={1.5} /></FileCaret></FileCard>
                        <FileCard><DocIcon kind="w" /><FileInfo><FileName>Kiran Dhanepkar - Sep Invoic...</FileName><FileSize>13 KB</FileSize></FileInfo><FileCaret><ChevronDown size={22} strokeWidth={1.5} /></FileCaret></FileCard>
                        <FileCard><DocIcon kind="w" /><FileInfo><FileName>Rahul Chechar- Sep Invoice 2...</FileName><FileSize>13 KB</FileSize></FileInfo><FileCaret><ChevronDown size={22} strokeWidth={1.5} /></FileCaret></FileCard>
                        <FileCard><DocIcon kind="w" /><FileInfo><FileName>Rajashri patil- Sep Invoice 20...</FileName><FileSize>13 KB</FileSize></FileInfo><FileCaret><ChevronDown size={22} strokeWidth={1.5} /></FileCaret></FileCard>
                      </FileGrid>
                    </MsgCard>
                    <ScrollArrow $top={12} $right={24} />
                    <ScrollThumb $top={44} $h={181} $right={9} $c="#8d9a9e" $w={8} />
                    <ScrollArrow $top={506} $right={24} $down />
                  </Messages>
                  <ComposeBar>
                    <ComposeTab $active>Interns invoices - Sept 202...</ComposeTab>
                    <ComposeTab><ComposeLeft><Pencil {...ChipIcon} size={18} />(No subject)</ComposeLeft><X size={20} strokeWidth={1.2} color={BLUE} /></ComposeTab>
                    <ComposeTab><ComposeLeft><Pencil {...ChipIcon} size={18} />(No subject)</ComposeLeft><X size={20} strokeWidth={1.2} color={BLUE} /></ComposeTab>
                  </ComposeBar>
                </ReadPane>
              </Split>
            </RightPane>
          </Work>
        </Workspace>
      </Body>

      <Taskbar>
        <Weather>
          <WeatherIcon><MoonLogo /><NotifDot $c="#c42b1c" $r={-5} $t={0} $w={20} $fs={12}>1</NotifDot></WeatherIcon>
          <WeatherText>28°C<WeatherSub>Clear</WeatherSub></WeatherText>
        </Weather>
        <WinLogo><WindowsLogo /></WinLogo>
        <TaskSearch>
          <Search size={23} strokeWidth={2} color="#222" />Search
          <SearchBadge><BagLogo /></SearchBadge>
        </TaskSearch>
        <TaskCell $w={60}><TaskViewLogo /></TaskCell>
        <TaskCell $w={50}><MeetLogo /></TaskCell>
        <TaskCell $w={57}><EdgeLogo /></TaskCell>
        <TaskCell><FolderLogo /><RunDot /></TaskCell>
        <TaskCell><LLogo /></TaskCell>
        <TaskCell $bg="#f8dfe2"><MailLogo /><RunDot $c="#c42b1c" /></TaskCell>
        <TaskCell $bg="#e0eef0"><ChromeLogo /><RunDot $c="#22808f" $wide /><NotifDot $c="#8b8f92" $r={4} $t={2} $w={20}><UserRound size={12} fill="#fff" /></NotifDot></TaskCell>
        <TaskCell><AlexaLogo /></TaskCell>
        <TaskCell><TeamsLogo /><RunDot /><NotifDot $c="#c42b1c" $r={3} $t={1}>1</NotifDot></TaskCell>
        <TaskCell><WpsLogo /><RunDot /></TaskCell>
        <TaskCell><WhatsLogo /><RunDot /><NotifDot $c="#22808f" $r={0} $t={0} $w={34} $fs={12}>99+</NotifDot></TaskCell>
        <TrayGap />
        <Tray $w={30}><ChevronUp size={20} strokeWidth={1.8} /></Tray>
        <Tray $w={50}><OneDriveLogo s={22} /></Tray>
        <TrayText $w={46}>ENG<span>IN</span></TrayText>
        <Tray $w={43}><Wifi size={20} strokeWidth={1.7} /></Tray>
        <Tray $w={20}><VolumeX size={20} strokeWidth={1.4} /></Tray>
        <Tray $w={42}><BatteryCharging size={21} strokeWidth={1.5} /></Tray>
        <TrayText $w={86} $right>19:31<span>10-10-2023</span></TrayText>
        <Counter>6</Counter>
      </Taskbar>
    </Page>
  );
}
